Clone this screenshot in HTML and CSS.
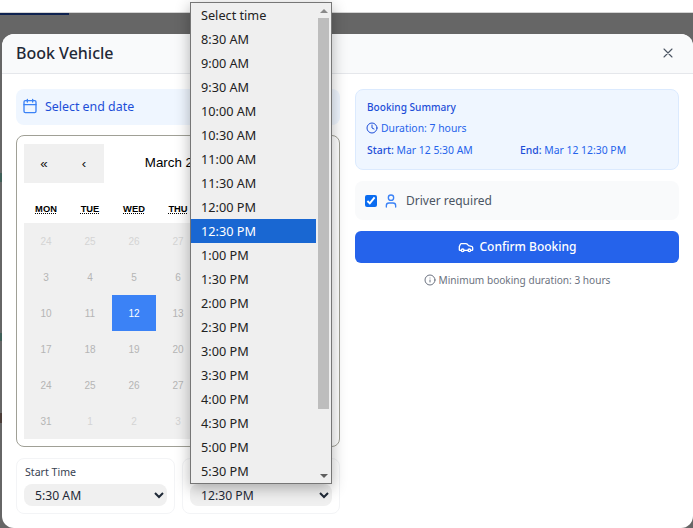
FILE: index.html
```html
<!DOCTYPE html>
<html lang="en">
<head>
<meta charset="utf-8">
<title>Book Vehicle</title>
<link rel="stylesheet" href="styles.css">
</head>
<body>
<div class="topstrip"></div>
<div class="overlay">
  <div class="navline"></div>
  <div class="modal">
    <header class="modal-head">
      <h2>Book Vehicle</h2>
      <svg class="close" width="16" height="16" viewBox="0 0 24 24" fill="none" stroke="#4b5563" stroke-width="1.6" stroke-linecap="round"><path d="M18 6 6 18M6 6l12 12"/></svg>
    </header>
    <div class="modal-body">
      <section class="col">
        <div class="hint">
          <svg width="16" height="16" viewBox="0 0 24 24" fill="none" stroke="#3b82f6" stroke-width="2" stroke-linecap="round" stroke-linejoin="round"><rect x="3" y="4" width="18" height="18" rx="2"/><path d="M16 2v4M8 2v4M3 10h18"/></svg>
          <span>Select end date</span>
        </div>
        <div class="calendar">
          <div class="cal-nav">
            <button class="nav-btn">«</button>
            <button class="nav-btn">‹</button>
            <span class="cal-label">March 2026</span>
            <button class="nav-btn">›</button>
            <button class="nav-btn">»</button>
          </div>
          <div class="weekdays">
            <abbr>MON</abbr><abbr>TUE</abbr><abbr>WED</abbr><abbr>THU</abbr><abbr>FRI</abbr><abbr>SAT</abbr><abbr>SUN</abbr>
          </div>
          <div class="days">
            <span class="day off">24</span><span class="day off">25</span><span class="day off">26</span><span class="day off">27</span><span class="day off">28</span><span class="day">1</span><span class="day">2</span>
            <span class="day">3</span><span class="day">4</span><span class="day">5</span><span class="day">6</span><span class="day">7</span><span class="day">8</span><span class="day">9</span>
            <span class="day">10</span><span class="day">11</span><span class="day active">12</span><span class="day">13</span><span class="day">14</span><span class="day">15</span><span class="day">16</span>
            <span class="day">17</span><span class="day">18</span><span class="day">19</span><span class="day">20</span><span class="day">21</span><span class="day">22</span><span class="day">23</span>
            <span class="day">24</span><span class="day">25</span><span class="day">26</span><span class="day">27</span><span class="day">28</span><span class="day">29</span><span class="day">30</span>
            <span class="day">31</span><span class="day off">1</span><span class="day off">2</span><span class="day off">3</span><span class="day off">4</span><span class="day off">5</span><span class="day off">6</span>
          </div>
        </div>
        <div class="times">
          <label class="time-card">
            <span class="time-label">Start Time</span>
            <select class="time-select"><option>5:30 AM</option></select>
          </label>
          <label class="time-card">
            <span class="time-label">End Time</span>
            <select class="time-select"><option>12:30 PM</option></select>
          </label>
        </div>
      </section>
      <section class="col">
        <div class="summary">
          <div class="sum-title">Booking Summary</div>
          <div class="sum-duration">
            <svg width="12" height="12" viewBox="0 0 24 24" fill="none" stroke="#1d4ed8" stroke-width="2" stroke-linecap="round" stroke-linejoin="round"><circle cx="12" cy="12" r="10"/><path d="M12 6v6l4 2"/></svg>
            <span>Duration: 7 hours</span>
          </div>
          <div class="sum-dates">
            <span><b>Start:</b> Mar 12 5:30 AM</span>
            <span><b>End:</b> Mar 12 12:30 PM</span>
          </div>
        </div>
        <label class="driver">
          <input type="checkbox" checked>
          <svg width="16" height="16" viewBox="0 0 24 24" fill="none" stroke="#3b82f6" stroke-width="2" stroke-linecap="round" stroke-linejoin="round"><path d="M19 21v-2a4 4 0 0 0-4-4H9a4 4 0 0 0-4 4v2"/><circle cx="12" cy="7" r="4"/></svg>
          <span>Driver required</span>
        </label>
        <button class="confirm">
          <svg width="16" height="16" viewBox="0 0 24 24" fill="none" stroke="#fff" stroke-width="2" stroke-linecap="round" stroke-linejoin="round"><path d="M19 17h2c.6 0 1-.4 1-1v-3c0-.9-.7-1.700-1.500-1.900C18.700 10.600 16 10 16 10s-1.300-1.400-2.200-2.300c-.5-.4-1.100-.7-1.800-.7H5c-.6 0-1.100.4-1.400.9l-1.400 2.900A3.700 3.700 0 0 0 2 12v4c0 .6.4 1 1 1h2"/><circle cx="7" cy="17" r="2"/><path d="M9 17h6"/><circle cx="17" cy="17" r="2"/></svg>
          <span>Confirm Booking</span>
        </button>
        <div class="minimum">
          <svg width="12" height="12" viewBox="0 0 24 24" fill="none" stroke="#6b7280" stroke-width="2" stroke-linecap="round" stroke-linejoin="round"><circle cx="12" cy="12" r="10"/><path d="M12 16v-4M12 8h.01"/></svg>
          <span>Minimum booking duration: 3 hours</span>
        </div>
      </section>
    </div>
  </div>
</div>
<div class="dropdown">
  <ul class="options">
    <li>Select time</li><li>8:30 AM</li><li>9:00 AM</li><li>9:30 AM</li><li>10:00 AM</li><li>10:30 AM</li><li>11:00 AM</li><li>11:30 AM</li><li>12:00 PM</li><li class="selected">12:30 PM</li><li>1:00 PM</li><li>1:30 PM</li><li>2:00 PM</li><li>2:30 PM</li><li>3:00 PM</li><li>3:30 PM</li><li>4:00 PM</li><li>4:30 PM</li><li>5:00 PM</li><li>5:30 PM</li>
  </ul>
  <div class="scrollbar">
    <i class="arrow up"></i>
    <i class="thumb"></i>
    <i class="arrow down"></i>
  </div>
</div>
</body>
</html>
```
FILE: styles.css
```css
* { box-sizing: border-box; }
html, body { margin: 0; height: 528px; overflow: hidden; }
body { background: #fff; font-family: "Noto Sans", sans-serif; color: #1f2937; position: relative; }
.topstrip { height: 12px; background: #fff; }
.overlay {
  height: 516px;
  border-top: 1px solid #d4d4d4;
  padding: 21px 0 0 2px;
  position: relative;
  background:
    linear-gradient(#3f5f58, #3f5f58) 0 160px / 2px 9px no-repeat,
    linear-gradient(#3f5f58, #3f5f58) 0 320px / 2px 8px no-repeat,
    linear-gradient(#4a3d38, #4a3d38) 0 400px / 2px 10px no-repeat,
    #666;
}
.navline { position: absolute; left: 0; top: 0; width: 69px; height: 2px; background: #0e2250; }
.modal { height: 494px; background: #fff; border-radius: 12px; overflow: hidden; }
.modal-head { height: 40px; background: #f9fafb; border-bottom: 1px solid #e5e7eb; display: flex; align-items: center; justify-content: space-between; padding: 0 17px 2px 14px; }
.modal-head h2 { margin: 0; font-size: 16px; font-weight: 500; color: #1f2937; }
.close { display: block; }
.modal-body { display: grid; grid-template-columns: 324px 324px; gap: 15px; padding: 15px 14px; }
.col { display: flex; flex-direction: column; min-width: 0; }
.hint { height: 36px; background: #eff6ff; border-radius: 8px; display: flex; align-items: center; gap: 7px; padding: 0 6px 2px; font-size: 12.4px; color: #1d4ed8; }
.calendar { margin-top: 10px; height: 312px; border: 1px solid #a0a096; border-radius: 8px; padding: 8px 8px 8px 7px; font-family: "Liberation Sans", Arial, sans-serif; background: #fff; }
.cal-nav { display: flex; height: 39px; margin-bottom: 12px; }
.nav-btn { width: 40px; border: 0; background: #f0f0f0; color: #111; font: 13.33px "Liberation Sans", Arial, sans-serif; padding: 0; }
.cal-label { flex: 1; display: flex; align-items: center; justify-content: center; font-size: 13.33px; color: #000; padding: 0 0 2px 5px; }
.weekdays { display: grid; grid-template-columns: repeat(7, 44px); height: 28px; align-items: center; text-align: center; }
.weekdays abbr { font-size: 9.33px; font-weight: 700; color: #000; text-decoration: underline dotted; }
.days { display: grid; grid-template-columns: repeat(7, 44px); grid-auto-rows: 36px; background: #f0f0f0; }
.day { display: flex; align-items: center; justify-content: center; font-size: 10px; color: #b5b5b5; }
.day.off { color: #d4d4d4; }
.day.active { background: #3b82f6; color: #fff; }
.times { margin-top: 11px; display: grid; grid-template-columns: 159px 158px; gap: 7px; }
.time-card { height: 56px; border: 1px solid #f3f4f6; border-radius: 8px; padding: 6px 7px 7px; display: flex; flex-direction: column; gap: 5px; }
.time-label { font-size: 10.6px; line-height: 14px; color: #374151; padding-left: 1px; }
.time-select { height: 23px; border: 0; border-radius: 8px; background-color: #f0f0f0; font: 12.2px "Noto Sans", sans-serif; color: #1f2937; padding: 0 7px; width: 100%; }
.summary { height: 81px; background: #eff6ff; border: 1px solid #dbeafe; border-radius: 8px; padding: 10px 11px; color: #1d4ed8; font-size: 10.4px; }
.sum-title { font-weight: 500; line-height: 14px; font-size: 10.1px; }
.sum-duration { display: flex; align-items: center; gap: 3px; margin: 7px 0 0 -1px; line-height: 14px; color: #2563eb; }
.sum-dates { display: grid; grid-template-columns: 153px 1fr; margin-top: 8px; line-height: 14px; color: #2563eb; }
.sum-dates b { font-weight: 500; color: #1d4ed8; }
.driver { margin-top: 11px; height: 39px; background: #f9fafb; border-radius: 8px; display: flex; align-items: center; padding: 0 10px; font-size: 12px; color: #4b5563; }
.driver input { margin: 0 6px 0 0; width: 12px; height: 12px; accent-color: #0b6cf0; }
.driver span { margin-left: 7px; }
.confirm { margin-top: 11px; height: 32px; border: 0; border-radius: 6px; background: #2563eb; color: #fff; display: flex; align-items: center; justify-content: center; gap: 6px; padding: 0 0 1px; font: 500 12px "Noto Sans", sans-serif; }
.minimum { margin-top: 10px; display: flex; align-items: center; justify-content: center; gap: 3px; font-size: 10.1px; line-height: 14px; color: #6b7280; }
.dropdown { position: absolute; left: 190px; top: 2px; width: 142px; height: 482px; background: #efefef; border: 1px solid #767676; box-shadow: 0 4px 14px rgba(0,0,0,.3); display: flex; overflow: hidden; }
.options { list-style: none; margin: 0; padding: 0; width: 125px; }
.options li { height: 24px; line-height: 24px; padding-left: 10px; font-size: 12.7px; color: #222; }
.options li.selected { background: #1967d2; color: #fff; }
.scrollbar { flex: 1; display: flex; flex-direction: column; align-items: center; position: relative; padding-top: 6px; }
.thumb { display: block; width: 11px; height: 391px; margin-top: 5px; background: #bdbdbd; }
.arrow { display: block; width: 0; height: 0; border-left: 4px solid transparent; border-right: 4px solid transparent; }
.arrow.up { border-bottom: 4px solid #8a8a8a; }
.arrow.down { position: absolute; bottom: 5px; border-top: 4px solid #5f5f5f; }
```
